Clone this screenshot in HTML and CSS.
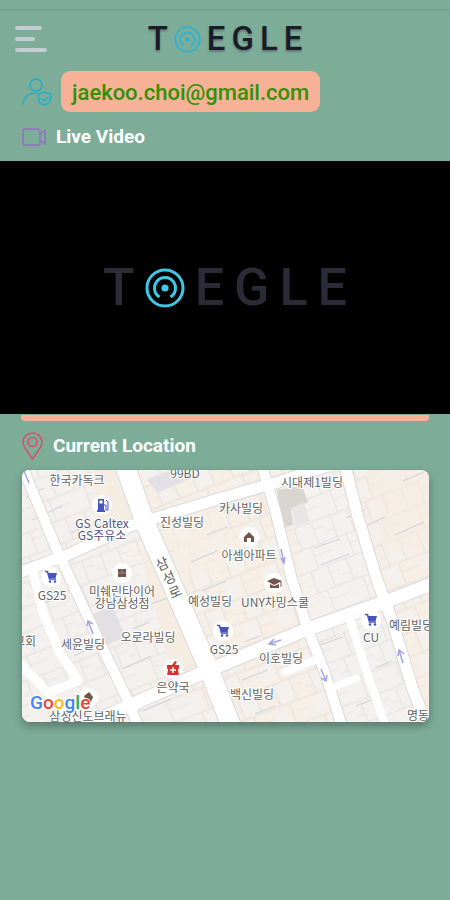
FILE: index.html
```html
<!DOCTYPE html>
<html lang="ko">
<head>
    <meta charset="UTF-8">
    <meta name="viewport" content="width=device-width, initial-scale=1.0">
    <title>Toegle</title>
    <link rel="stylesheet" href="styles.css">
</head>
<body>
    <!-- Shared symbols -->
    <svg class="symbols" aria-hidden="true">
        <symbol id="target" viewBox="0 0 40 40">
            <g fill="none" stroke="currentColor" stroke-width="3">
                <circle cx="20" cy="20" r="18"/>
                <path d="M14.5 29 A10.5 10.5 0 1 1 25.5 29"/>
            </g>
            <circle cx="20" cy="20" r="3.6" fill="currentColor"/>
        </symbol>
        <symbol id="cart" viewBox="-7 -7 14 14">
            <path d="M-6 -5.500h2.500l2 7.500h6.500" fill="none" stroke="#4653c0" stroke-width="1.500"/>
            <path d="M-3.500 -4h9.500l-1.500 5h-6.500z" fill="#4653c0"/>
            <circle cx="-1" cy="4.500" r="1.300" fill="#4653c0"/>
            <circle cx="4" cy="4.500" r="1.300" fill="#4653c0"/>
        </symbol>
    </svg>

    <div class="status-strip"></div>

    <header class="topbar">
        <button class="menu-button" aria-label="Menu">
            <span class="bar"></span>
            <span class="bar bar-short"></span>
            <span class="bar bar-long"></span>
        </button>
        <div class="logo logo-small">
            <span>T</span><svg class="logo-target"><use href="#target"/></svg><span>E</span><span>G</span><span>L</span><span>E</span>
        </div>
    </header>

    <main>
        <div class="account">
            <svg class="account-icon" viewBox="0 0 30 30" fill="none" stroke="#25afc4" stroke-width="1.600" stroke-linecap="round" stroke-linejoin="round">
                <circle cx="14" cy="8" r="6"/>
                <path d="M1 27C2 20 6 16 14 16"/>
                <path d="M22.500 15l6 2v5c0 3-3 5-6 6c-3-1-6-3-6-6v-5z"/>
                <path d="M20 22l2 2l4-4"/>
            </svg>
            <span class="email">jaekoo.choi@gmail.com</span>
        </div>

        <h2 class="section-title title-video">
            <svg class="video-icon" viewBox="0 0 24 18" fill="none" stroke="#9271bd" stroke-width="1.500" stroke-linejoin="round">
                <rect x="1" y="1" width="17" height="16" rx="2"/>
                <path d="M18 6l5-4v14l-5-4"/>
            </svg>
            Live Video
        </h2>

        <div class="video">
            <div class="logo logo-large">
                <span>T</span><svg class="logo-target"><use href="#target"/></svg><span>E</span><span>G</span><span>L</span><span>E</span>
            </div>
        </div>
        <div class="card-edge"></div>

        <h2 class="section-title title-location">
            <svg class="pin-icon" viewBox="0 0 21 28" fill="none" stroke="#d5506f" stroke-width="1.600">
                <path d="M10.500 27C8 22 1 16 1 10a9.500 9 0 0 1 19 0C20 16 13 22 10.500 27z"/>
                <circle cx="10.500" cy="10" r="4.500"/>
            </svg>
            Current Location
        </h2>

        <svg class="map" viewBox="22 470 407 252" role="img" aria-label="Map">
            <defs>
                <pattern id="plots" width="38" height="46" patternUnits="userSpaceOnUse" patternTransform="rotate(-21)">
                    <path d="M0 1H38M0 24H38M9 1V24M27 1V24M18 24V46" stroke="#e3e0de" fill="none"/>
                    <path d="M27 9H38M0 15H9M18 34H38" stroke="#e9e6e3" fill="none"/>
                    <path d="M11 4h14v17H11zM2 27h13v15H2z" fill="#f3f0ed"/>
                </pattern>
            </defs>

            <rect x="22" y="470" width="407" height="252" fill="#f7efe6"/>
            <path d="M22 470H118L205 722H22z" fill="#f3f0ee"/>
            <path d="M290 485L345 470L385 600L310 625z" fill="#f4f1ef"/>
            <path d="M312 635L386 608L425 722H340z" fill="#f3f1ef"/>
            <rect x="22" y="470" width="407" height="252" fill="url(#plots)"/>

            <!-- Warm blocks along the main road -->
            <path d="M93 470H114L137 518L100 532z" fill="#f5ece2"/>
            <path d="M140 552L153 548L198 662L172 673z" fill="#f5ece2"/>
            <path d="M160 512L215 495L240 560L195 576L182 570z" fill="#f6eee5" opacity=".7"/>
            <path d="M366 470H429V545L385 555z" fill="#f5ede4" opacity=".7"/>

            <!-- Buildings -->
            <path d="M93 614L112 606L126 637L107 645z" fill="#e2e0e4"/>
            <path d="M147 479L171 470H190L194 477L157 493z" fill="#e3e1e5"/>
            <path d="M277 490L302 486L308 502L291 510L293 525L282 528z" fill="#d9d6d2"/>
            <path d="M291 508L304 503L310 521L295 526z" fill="#e8e6e4"/>

            <g fill="none" stroke="#cdcfda">
                <path d="M26 498L44 488M32 520L62 506M71 533L86 526M191 562L217 551M368 525L385 517M403 481L424 472M395 535L424 522M346 518L365 510M320 565L349 554M151 604L178 594M244 642L260 636M242 680L268 670M132 629L150 622M124 668L151 656M143 711L171 699M314 548L340 539M255 714L275 706M320 645L343 637M375 668L392 661M356 706L377 698M207 535L227 527M202 591L226 581M36 607L50 601M74 656L95 646"/>
            </g>

            <!-- Roads -->
            <g class="road-edges">
                <path d="M125 466L146 525L168 575L208 667L232 728" stroke-width="21"/>
                <path d="M18 573L67 555L133 525L225 497L275 483L328 466" stroke-width="13"/>
                <path d="M22 466L57 550L93 628L130 705L138 726" stroke-width="12"/>
                <path d="M100 719L200 674L305 630L385 602L434 583" stroke-width="15"/>
                <path d="M262 466L275 510L292 580L308 630L325 673L342 726" stroke-width="12"/>
                <path d="M345 466L358 517L377 580L392 620L412 687L427 726" stroke-width="13"/>
            </g>
            <g class="roads">
                <path d="M125 466L146 525L168 575L208 667L232 728" stroke-width="19"/>
                <path d="M18 573L67 555L133 525L225 497L275 483L328 466" stroke-width="11"/>
                <path d="M22 466L57 550L93 628L130 705L138 726" stroke-width="10"/>
                <path d="M32 568L43 613L60 653L78 681L48 693L20 663" stroke-width="9"/>
                <path d="M48 693L76 724" stroke-width="8"/>
                <path d="M100 719L200 674L305 630L385 602L434 583" stroke-width="13"/>
                <path d="M262 466L275 510L292 580L308 630L325 673L342 726" stroke-width="10"/>
                <path d="M345 466L358 517L377 580L392 620L412 687L427 726" stroke-width="11"/>
                <path d="M348 613L365 667L385 724" stroke-width="8"/>
                <path d="M285 672L315 660" stroke-width="8"/>
                <path d="M332 688L357 678" stroke-width="7"/>
            </g>

            <!-- One-way arrows -->
            <g fill="none" stroke="#a3a3ec" stroke-width="1.500">
                <path d="M24 471L29 483M281 549L284 563M281 558l3 5l1-6"/>
                <path d="M88 621L93 634M87 626l1-5l5 3"/>
                <path d="M281 640L269 644M274 639l-5 5l7 1"/>
                <path d="M321 669L326 681M321 678l5 3l1-6"/>
                <path d="M399 650L403 663M398 656l1-6l5 4"/>
            </g>

            <!-- Place markers -->
            <g fill="#fff">
                <circle cx="102" cy="505" r="10"/>
                <circle cx="51" cy="577" r="10"/>
                <circle cx="122" cy="573" r="10"/>
                <circle cx="249" cy="537" r="10"/>
                <circle cx="274" cy="583" r="10"/>
                <circle cx="223" cy="631" r="10"/>
                <circle cx="371" cy="620" r="10"/>
                <circle cx="173" cy="669" r="10"/>
                <circle cx="88" cy="698" r="10"/>
            </g>
            <use href="#cart" x="44" y="570" width="14" height="14"/>
            <use href="#cart" x="216" y="624" width="14" height="14"/>
            <use href="#cart" x="364" y="613" width="14" height="14"/>
            <path d="M98 499h6v12h-6zM97 510h8v2h-8z" fill="#4653c0"/>
            <path d="M99.500 500.500h3v3h-3z" fill="#fff"/>
            <path d="M104 505h2v5h2v-8l-2-2" fill="none" stroke="#4653c0"/>
            <path d="M118 569h8v8h-8z" fill="#735448"/>
            <path d="M122 569v4M118 573h8" stroke="#a38a80"/>
            <path d="M249 532l5 5v5h-3v-4h-4v4h-3v-5z" fill="#735448"/>
            <path d="M267 581l7-3l8 3l-8 4zM270 584l4 2l5-2v4h-9z" fill="#735448"/>
            <path d="M281 581v6" stroke="#735448"/>
            <path d="M167 665h12v3l-1 2l1 5h-12l1-5l-1-2zM172 665l3-4l2 1l-2 3z" fill="#d9312d"/>
            <path d="M173 667v6M170 670h6" stroke="#fff" stroke-width="1.500"/>
            <path d="M84 696l5-4l4 5l-2 5h-4z" fill="#735448"/>

            <!-- Place names -->
            <g class="labels">
                <text x="77" y="485">한국카독크</text>
                <text x="185" y="478">99BD</text>
                <text x="312" y="487">시대제1빌딩</text>
                <text x="182" y="527">진성빌딩</text>
                <text x="241" y="513">카사빌딩</text>
                <text x="249" y="560">아셈아파트</text>
                <text x="122" y="596">미쉐린타이어</text>
                <text x="122" y="608">강남삼성점</text>
                <text x="210" y="606">예성빌딩</text>
                <text x="275" y="607">UNY차밍스쿨</text>
                <text x="148" y="642">오로라빌딩</text>
                <text x="83" y="649">세윤빌딩</text>
                <text x="25" y="646">교회</text>
                <text x="281" y="663">이호빌딩</text>
                <text x="411" y="630">예림빌딩</text>
                <text x="173" y="692">은약국</text>
                <text x="252" y="699">백신빌딩</text>
                <text x="88" y="721">삼성신도브래뉴</text>
                <text x="418" y="720">명동</text>
                <text x="371" y="642">CU</text>
                <text x="52" y="600">GS25</text>
                <text x="224" y="654">GS25</text>
                <g class="labels-blue">
                    <text x="102" y="528">GS Caltex</text>
                    <text x="102" y="540">GS주유소</text>
                </g>
                <g class="labels-road">
                    <text x="162" y="569" transform="rotate(-24 162 564)">삼</text>
                    <text x="169" y="583" transform="rotate(-24 169 578)">성</text>
                    <text x="175" y="597" transform="rotate(-24 175 592)">로</text>
                </g>
            </g>
            <text class="google" x="30" y="709"><tspan fill="#4285f4">G</tspan><tspan fill="#ea4335">o</tspan><tspan fill="#fbbc05">o</tspan><tspan fill="#4285f4">g</tspan><tspan fill="#34a853">l</tspan><tspan fill="#ea4335">e</tspan></text>
        </svg>
    </main>
</body>
</html>
```
FILE: styles.css
```css
* {
    box-sizing: border-box;
}
body {
    margin: 0;
    min-height: 100vh;
    background-color: #7dac99;
    font-family: Roboto, "Noto Sans CJK KR", sans-serif;
}
.symbols {
    display: none;
}
.status-strip {
    height: 11px;
    border-bottom: 2px solid #76a592;
}
.topbar {
    display: grid;
    grid-template-columns: 1fr auto 1fr;
    align-items: center;
    height: 56px;
    padding: 0 15px;
}
.menu-button {
    display: flex;
    flex-direction: column;
    gap: 7px;
    width: 32px;
    padding: 0;
    background: none;
    border: none;
    cursor: pointer;
}
.bar {
    width: 27px;
    height: 4px;
    border-radius: 2px;
    background-color: #c5ccd3;
}
.bar-short {
    width: 20px;
}
.bar-long {
    width: 32px;
}
.logo {
    display: flex;
    align-items: center;
    font-weight: 500;
}
.logo-small {
    gap: 6px;
    font-size: 33px;
    line-height: 40px;
    color: #1c1b29;
    text-shadow: 0 2px 2px rgba(0,0,0,0.25);
}
.logo-small .logo-target {
    width: 27px;
    height: 27px;
    color: #37b1c9;
}
.logo-large {
    gap: 10px;
    font-size: 52px;
    line-height: 60px;
    color: #2b2a37;
}
.logo-large .logo-target {
    width: 40px;
    height: 40px;
    color: #3cc8e6;
}
.account {
    display: flex;
    align-items: center;
    gap: 9px;
    padding: 4px 22px 0;
}
.account-icon {
    width: 30px;
    height: 30px;
}
.email {
    padding: 7px 11px 5px;
    border-radius: 9px;
    background-color: #f6b196;
    color: #2f9207;
    font-size: 22px;
    font-weight: 500;
    line-height: 29px;
}
.section-title {
    display: flex;
    align-items: center;
    margin: 0;
    padding: 0 22px;
    color: #fff;
    font-size: 19px;
    font-weight: 700;
}
.title-video {
    gap: 10px;
    height: 49px;
}
.title-location {
    gap: 10px;
    height: 49px;
}
.video-icon {
    width: 24px;
    height: 18px;
}
.pin-icon {
    width: 21px;
    height: 28px;
}
.video {
    display: flex;
    align-items: center;
    justify-content: center;
    aspect-ratio: 450 / 253;
    background-color: #000;
}
.card-edge {
    height: 6px;
    margin: 1px 21px 0;
    border-radius: 0 0 4px 4px;
    background-color: #f6b196;
}
.map {
    display: block;
    width: calc(100% - 43px);
    margin: 0 auto;
    border-radius: 8px;
    box-shadow: 0 4px 8px rgba(0,0,0,0.3);
}
.road-edges path {
    fill: none;
    stroke: #dddada;
}
.roads path {
    fill: none;
    stroke: #fff;
    stroke-linejoin: round;
    stroke-linecap: round;
}
.labels {
    font-family: "Noto Sans CJK KR", sans-serif;
    font-size: 12px;
    text-anchor: middle;
    fill: #626262;
    stroke: #fff;
    stroke-width: 2px;
    paint-order: stroke;
}
.labels-blue {
    fill: #51547c;
}
.labels-road {
    font-size: 14px;
}
.google {
    font-family: Roboto, sans-serif;
    font-size: 19px;
    font-weight: 500;
    stroke: #fff;
    stroke-width: 2px;
    paint-order: stroke;
}
```
